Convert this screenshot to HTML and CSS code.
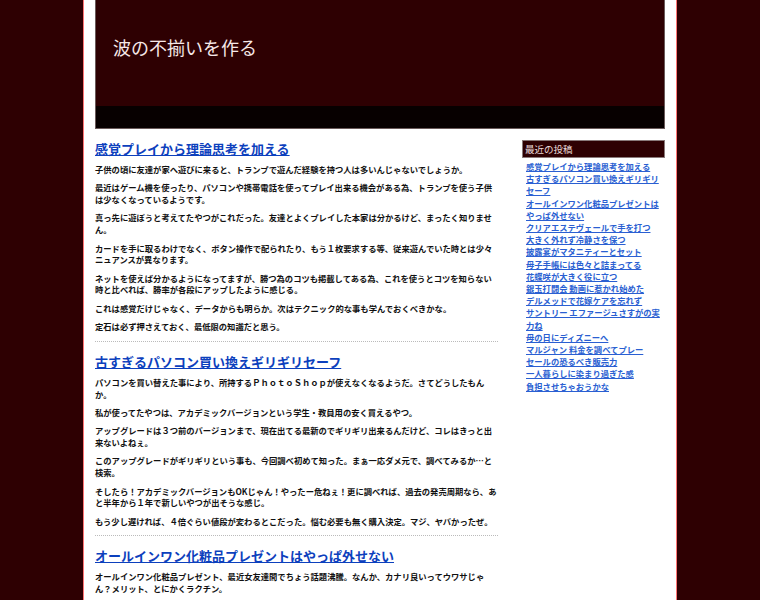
FILE: index.html
```html
<!DOCTYPE html>
<html lang="ja">
<head>
<meta charset="utf-8">
<title>波の不揃いを作る</title>
<link rel="stylesheet" href="styles.css">
</head>
<body>
<div class="wrap">
  <header class="site-header">
    <div class="header-top">
      <h1 class="site-title">波の不揃いを作る</h1>
    </div>
    <div class="header-band"></div>
  </header>
  <div class="content">
    <main class="main">
      <article class="post">
        <h2 class="post-title"><a href="#">感覚プレイから理論思考を加える</a></h2>
        <p>子供の頃に友達が家へ遊びに来ると、トランプで遊んだ経験を持つ人は多いんじゃないでしょうか。</p>
        <p>最近はゲーム機を使ったり、パソコンや携帯電話を使ってプレイ出来る機会がある為、トランプを使う子供は少なくなっているようです。</p>
        <p>真っ先に遊ぼうと考えてたやつがこれだった。友達とよくプレイした本家は分かるけど、まったく知りません。</p>
        <p>カードを手に取るわけでなく、ボタン操作で配られたり、もう１枚要求する等、従来遊んでいた時とは少々ニュアンスが異なります。</p>
        <p>ネットを使えば分かるようになってますが、勝つ為のコツも掲載してある為、これを使うとコツを知らない時と比べれば、勝率が各段にアップしたように感じる。</p>
        <p>これは感覚だけじゃなく、データからも明らか。次はテクニック的な事も学んでおくべきかな。</p>
        <p>定石は必ず押さえておく、最低限の知識だと思う。</p>
      </article>
      <article class="post">
        <h2 class="post-title"><a href="#">古すぎるパソコン買い換えギリギリセーフ</a></h2>
        <p>パソコンを買い替えた事により、所持するＰｈｏｔｏＳｈｏｐが使えなくなるようだ。さてどうしたもんか。</p>
        <p>私が使ってたやつは、アカデミックバージョンという学生・教員用の安く買えるやつ。</p>
        <p>アップグレードは３つ前のバージョンまで、現在出てる最新のでギリギリ出来るんだけど、コレはきっと出来ないよねぇ。</p>
        <p>このアップグレードがギリギリという事も、今回調べ初めて知った。まぁ一応ダメ元で、調べてみるか…と検索。</p>
        <p>そしたら！アカデミックバージョンもOKじゃん！やったー危ねぇ！更に調べれば、過去の発売周期なら、あと半年から１年で新しいやつが出そうな感じ。</p>
        <p>もう少し遅ければ、４倍ぐらい値段が変わるとこだった。悩む必要も無く購入決定。マジ、ヤバかったぜ。</p>
      </article>
      <article class="post">
        <h2 class="post-title"><a href="#">オールインワン化粧品プレゼントはやっぱ外せない</a></h2>
        <p>オールインワン化粧品プレゼント、最近女友達間でちょう話題沸騰。なんか、カナリ良いってウワサじゃん？メリット、とにかくラクチン。</p>
      </article>
    </main>
    <aside class="sidebar">
      <h3 class="widget-title">最近の投稿</h3>
      <ul class="recent">
        <li><a href="#">感覚プレイから理論思考を加える</a></li>
        <li><a href="#">古すぎるパソコン買い換えギリギリセーフ</a></li>
        <li><a href="#">オールインワン化粧品プレゼントはやっぱ外せない</a></li>
        <li><a href="#">クリアエステヴェールで手を打つ</a></li>
        <li><a href="#">大きく外れず冷静さを保つ</a></li>
        <li><a href="#">披露宴がマタニティーとセット</a></li>
        <li><a href="#">母子手帳には色々と詰まってる</a></li>
        <li><a href="#">花蝶咲が大きく役に立つ</a></li>
        <li><a href="#">銀玉打闘会 動画に惹かれ始めた</a></li>
        <li><a href="#">デルメッドで花嫁ケアを忘れず</a></li>
        <li><a href="#">サントリー エファージュさすがの実力ね</a></li>
        <li><a href="#">母の日にディズニーへ</a></li>
        <li><a href="#">マルジャン 料金を調べてプレー</a></li>
        <li><a href="#">セールの恐るべき販売力</a></li>
        <li><a href="#">一人暮らしに染まり過ぎた感</a></li>
        <li><a href="#">負担させちゃおうかな</a></li>
      </ul>
    </aside>
  </div>
</div>
</body>
</html>
```
FILE: styles.css
```css
html, body {
  margin: 0;
  padding: 0;
}
body {
  background: #2e0002;
  font-family: "Noto Sans CJK JP", "Noto Sans", sans-serif;
  color: #111;
}
.wrap {
  width: 570px;
  margin: 0 auto;
  padding: 0 11px 20px;
  background: #fff;
  border-left: 1px solid #ff7474;
  border-right: 1px solid #ff7474;
  min-height: 600px;
}
.site-header {
  border: 1px solid #6a5a5a;
  border-top: 0;
}
.header-top {
  height: 106px;
  background: #2e0002;
  box-sizing: border-box;
  padding: 35px 0 0 17px;
}
.site-title {
  margin: 0;
  font-size: 18px;
  line-height: 24px;
  font-weight: normal;
  color: #f6e8e8;
}
.header-band {
  height: 22px;
  background: #070000;
}
.content {
  display: flex;
  gap: 24px;
}
.main {
  width: 403px;
  padding-top: 12px;
}
.post {
  padding-bottom: 8px;
  border-bottom: 1px dotted #bbb;
  margin-bottom: 12px;
}
.post-title {
  margin: 0 0 7px;
  font-size: 13px;
  line-height: 16px;
  font-weight: bold;
}
.post-title a {
  color: #0c40bd;
  text-decoration: underline;
}
.post p {
  margin: 0 0 6.7px;
  font-size: 8.3px;
  line-height: 11.7px;
  font-weight: bold;
}
.post p:last-child {
  margin-bottom: 0;
}
.sidebar {
  width: 143px;
  padding-top: 11px;
}
.widget-title {
  margin: 0;
  height: 18px;
  box-sizing: border-box;
  border: 1px solid #8a7a7a;
  background: #2e0002;
  color: #eadada;
  font-size: 9.5px;
  line-height: 16px;
  font-weight: normal;
  padding-left: 2px;
}
.recent {
  list-style: none;
  margin: 2px 0 0;
  padding: 0 0 0 4px;
}
.recent li {
  font-size: 8.3px;
  line-height: 12.2px;
  font-weight: bold;
}
.recent a {
  color: #2a5fd2;
  text-decoration: underline;
}
```
